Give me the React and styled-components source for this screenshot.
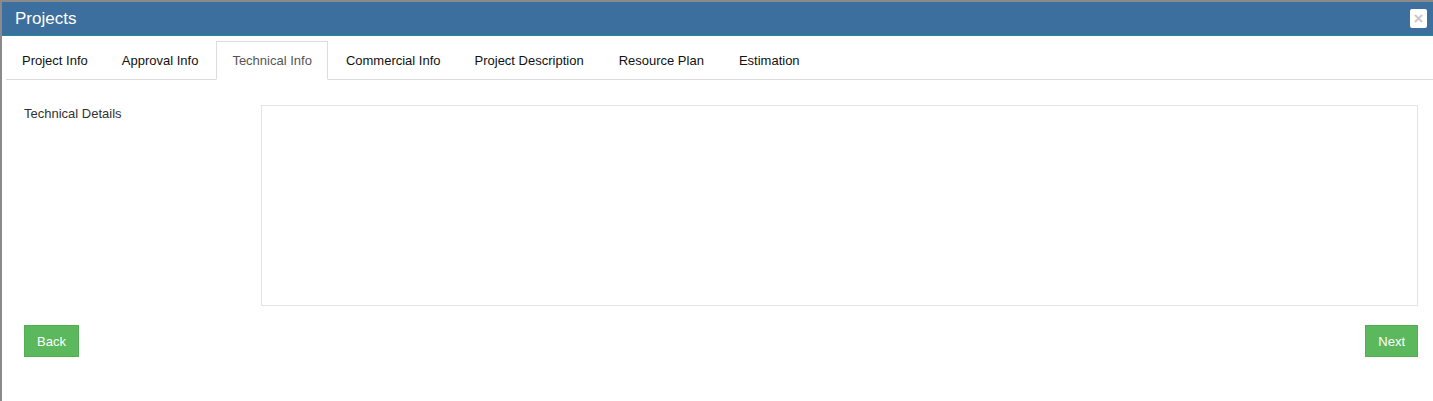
import React, { useState } from 'react';
import styled, { createGlobalStyle } from 'styled-components';

const GlobalStyle = createGlobalStyle`
  html, body { margin: 0; padding: 0; background: #8a8a8a; }
  body { font-family: "Liberation Sans", Arial, sans-serif; font-size: 13px; color: #333; }
`;

// STYLES
const Backdrop = styled.div`
  width: 1433px;
  height: 401px;
  padding: 2px 0 0 2px;
  box-sizing: border-box;
  overflow: hidden;
  background: #8a8a8a;
`;

const Modal = styled.div`
  background: #fff;
  height: 100%;
  display: flex;
  flex-direction: column;
`;

const Header = styled.div`
  height: 33px;
  background: #3c6e9e;
  border-bottom: 1px solid #1f8a9a;
  display: flex;
  align-items: center;
  justify-content: space-between;
  padding: 0 6px 0 13px;
`;

const Title = styled.h4`
  margin: 0;
  color: #fff;
  font-size: 17px;
  font-weight: normal;
`;

const CloseButton = styled.button`
  width: 17px;
  height: 19px;
  padding: 0;
  border: none;
  border-radius: 2px;
  background: #fff;
  color: #c8c8c8;
  font-size: 17px;
  font-weight: bold;
  line-height: 19px;
  font-family: "Liberation Sans", Arial, sans-serif;
  cursor: pointer;
`;

const Body = styled.div`
  padding: 5px 0 0 4px;
`;

const Tabs = styled.ul`
  list-style: none;
  margin: 0;
  padding: 0;
  display: flex;
  border-bottom: 1px solid #ddd;
`;

const Tab = styled.li`
  margin-right: ${p => (p.$gap ? '3px' : '2px')};
  margin-bottom: -1px;
  padding: 10px 15px;
  line-height: 17px;
  border: 1px solid ${p => (p.$active ? '#ddd' : 'transparent')};
  border-bottom-color: ${p => (p.$active ? '#fff' : 'transparent')};
  background: ${p => (p.$active ? '#fff' : 'transparent')};
  color: ${p => (p.$active ? '#555' : '#111')};
  cursor: pointer;
`;

const Content = styled.div`
  padding: 25px 15px 0 22px;
`;

const FormRow = styled.div`
  display: flex;
  align-items: flex-start;
`;

const Label = styled.label`
  width: 237px;
  flex-shrink: 0;
  padding-top: 0;
  color: #333;
  line-height: 18.5px;
`;

const TextArea = styled.textarea`
  flex: 1;
  height: 201px;
  box-sizing: border-box;
  margin: 0;
  border: 1px solid #e3e3e3;
  resize: none;
  outline: none;
  font-family: inherit;
`;

const Actions = styled.div`
  display: flex;
  justify-content: space-between;
  margin-top: 19px;
`;

const GreenButton = styled.button`
  height: 32px;
  padding: 0 12px;
  border: 1px solid #53ad53;
  background: #5cb85c;
  color: #fff;
  font-size: 13px;
  font-family: "Liberation Sans", Arial, sans-serif;
  cursor: pointer;
`;

const tabs = [
  'Project Info',
  'Approval Info',
  'Technical Info',
  'Commercial Info',
  'Project Description',
  'Resource Plan',
  'Estimation',
];

export default function App() {
  const [active, setActive] = useState(2);
  return (
    <>
      <GlobalStyle />
      <Backdrop>
        <Modal>
          <Header>
            <Title>Projects</Title>
            <CloseButton>×</CloseButton>
          </Header>
          <Body>
            <Tabs>
              {tabs.map((t, i) => (
                <Tab key={t} $active={i === active} $gap={i >= 4} onClick={() => setActive(i)}>
                  {t}
                </Tab>
              ))}
            </Tabs>
          </Body>
          <Content>
            <FormRow>
              <Label>Technical Details</Label>
              <TextArea />
            </FormRow>
            <Actions>
              <GreenButton>Back</GreenButton>
              <GreenButton>Next</GreenButton>
            </Actions>
          </Content>
        </Modal>
      </Backdrop>
    </>
  );
}
